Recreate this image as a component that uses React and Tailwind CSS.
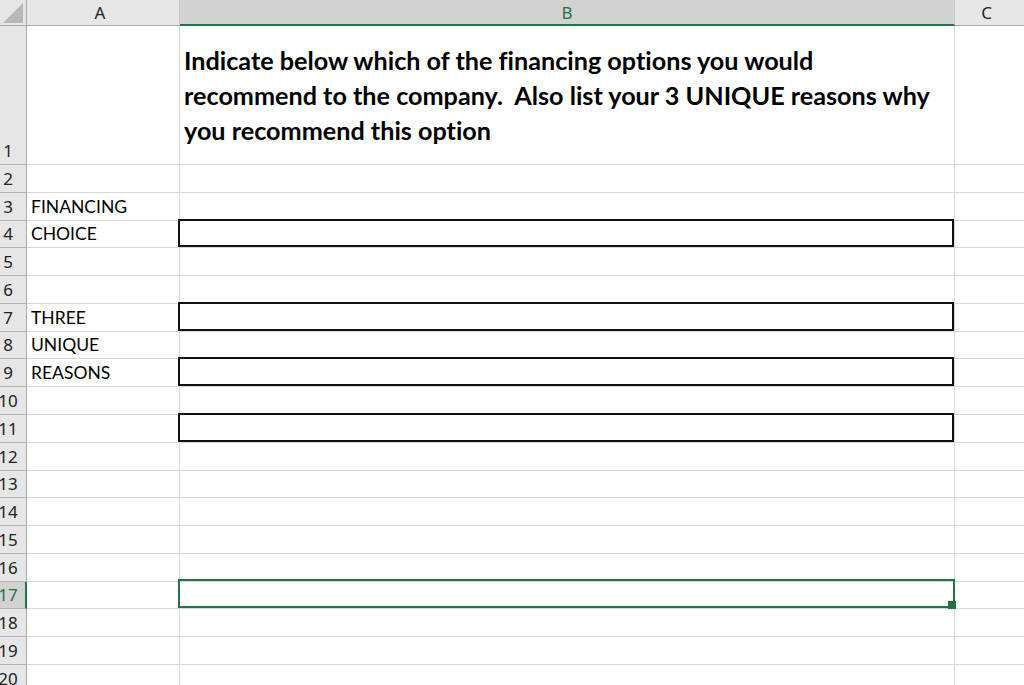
import React from 'react';

// row heights incl. bottom grid line
const rows = [
  { n: 1, h: 139 },
  { n: 2, h: 28 },
  { n: 3, h: 28, a: 'FINANCING' },
  { n: 4, h: 27, a: 'CHOICE', box: true },
  { n: 5, h: 28 },
  { n: 6, h: 28 },
  { n: 7, h: 28, a: 'THREE', box: true },
  { n: 8, h: 27, a: 'UNIQUE' },
  { n: 9, h: 28, a: 'REASONS', box: true },
  { n: 10, h: 28 },
  { n: 11, h: 28, box: true },
  { n: 12, h: 28 },
  { n: 13, h: 27 },
  { n: 14, h: 28 },
  { n: 15, h: 28 },
  { n: 16, h: 28 },
  { n: 17, h: 27, selected: true },
  { n: 18, h: 28 },
  { n: 19, h: 28 },
  { n: 20, h: 28 },
];

const ui = { fontFamily: '"Noto Sans", "Open Sans", sans-serif' };
const cell = { fontFamily: 'Lato, "Open Sans", sans-serif', fontVariantLigatures: 'none' };

const App = () => {
  return (
    <div className="w-[1024px] h-[685px] overflow-hidden bg-white text-black">
      {/* column headers */}
      <div className="flex h-[26px]" style={ui}>
        <div className="relative w-[27px] shrink-0 bg-[#e6e6e6] border-r border-b border-[#ababab]">
          <svg className="absolute left-[3px] top-[3px]" width="20" height="20" viewBox="0 0 20 20">
            <polygon points="20,0 20,20 0,20" fill="#b8b8b8" />
          </svg>
        </div>
        <div className="w-[153px] shrink-0 bg-[#e6e6e6] border-r border-[#c8c8c8] border-b border-b-[#ababab] flex items-center justify-center text-[17px] text-[#222] pr-[6px]">
          A
        </div>
        <div className="w-[775px] shrink-0 bg-[#d2d2d2] border-r border-[#c8c8c8] border-b-2 border-b-[#217346] flex items-center justify-center text-[17px] text-[#217346] pt-[1px]">
          B
        </div>
        <div className="flex-1 bg-[#e6e6e6] border-b border-[#ababab] flex items-center justify-center text-[17px] text-[#222] pr-[6px]">
          C
        </div>
      </div>

      {rows.map((r) => (
        <div key={r.n} className="flex" style={{ height: r.h }}>
          {/* row number */}
          <div
            className={`w-[27px] shrink-0 flex items-end overflow-hidden border-b border-[#b4b4b4] ${
              r.selected ? 'bg-[#d2d2d2] border-r-2 border-r-[#217346] text-[#217346]' : 'bg-[#e6e6e6] border-r border-r-[#ababab] text-[#222]'
            }`}
            style={ui}
          >
            <div className="h-[27px] w-[16px] shrink-0 flex items-center justify-center text-[17px] leading-none">
              {r.n}
            </div>
          </div>

          {/* column A */}
          <div className="w-[153px] shrink-0 border-r border-b border-[#d8d8d8] flex items-end pl-[4px]" style={cell}>
            {r.a && <div className="h-[27px] flex items-center text-[17.5px] leading-none">{r.a}</div>}
          </div>

          {/* column B */}
          <div className="relative w-[775px] shrink-0 border-r border-b border-[#d8d8d8]" style={cell}>
            {r.n === 1 && (
              <div className="pt-[17px] pl-[4px] text-[25.2px] font-bold leading-[35px]">
                Indicate below which of the financing options you would
                <br />
                recommend to the company.&nbsp; Also list your 3 UNIQUE reasons why
                <br />
                you recommend this option
              </div>
            )}
            {r.box && <div className="absolute -left-[2px] -top-[2px] right-0 bottom-0 border-2 border-[#111]" />}
            {r.selected && (
              <>
                <div className="absolute -left-[2px] -top-[3px] -right-[1px] bottom-0 border-2 border-[#217346]" />
                <div className="absolute -right-[2px] -bottom-[1px] w-[8px] h-[8px] bg-[#217346]" />
              </>
            )}
          </div>

          {/* column C */}
          <div className="flex-1 border-b border-[#d8d8d8]" />
        </div>
      ))}
    </div>
  );
};

export default App;
